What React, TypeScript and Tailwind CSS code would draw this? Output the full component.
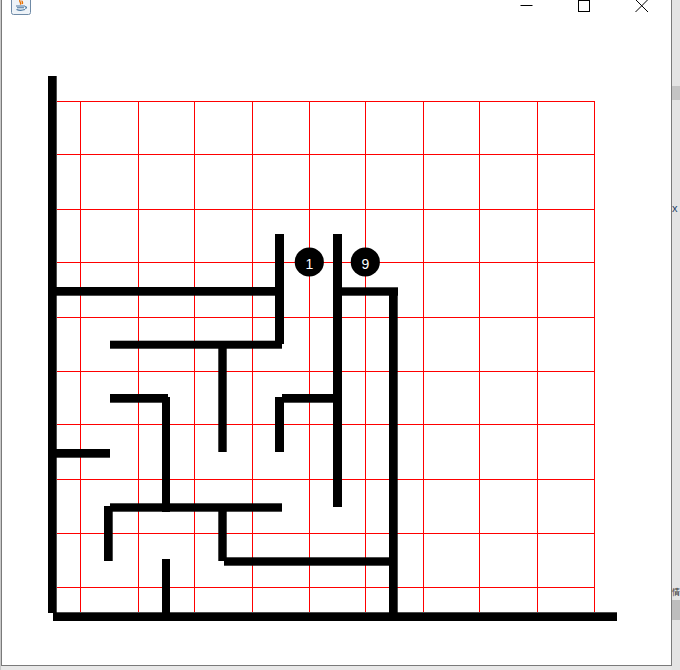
import React from 'react';

// wall segments of the maze, in page pixels: x, y, w, h
const walls: [number, number, number, number][] = [
  [48, 76, 8.7, 537],
  [53, 612.3, 564, 8.7],
  [48, 287, 236, 8.7],
  [275, 234, 9, 110],
  [110, 340.7, 172, 8],
  [218.3, 345, 8.4, 107],
  [110, 394, 58, 8.7],
  [162, 397, 8, 115],
  [48, 449, 62, 8.7],
  [282, 394, 60, 8.7],
  [275, 397, 9, 55],
  [333, 234, 9, 273],
  [342, 287.3, 56, 8.4],
  [389, 289, 8.7, 324],
  [110, 503.3, 172, 8.4],
  [104, 506, 8.7, 55],
  [218.3, 508, 8.4, 53],
  [224, 557.3, 166, 8.4],
  [162, 559, 8, 54],
];

const cols = [80, 138, 194, 252, 309, 365, 423, 479, 537, 594];
const rows = [101, 154, 209, 262, 317, 371, 424, 479, 533, 587];

const markers = [
  { x: 309.3, y: 262, label: '1' },
  { x: 365.3, y: 262, label: '9' },
];

const JavaIcon = () => (
  <svg width="20" height="16" viewBox="0 4 20 16">
    <rect x="0.5" y="0.5" width="19" height="19" rx="2" fill="#eef3f8" stroke="#6f8aa6" />
    <path d="M9 5 C7.8 6.8 10.6 7.4 9.4 9.6 M11.2 5.6 C10.6 6.8 12.2 7.4 11.2 9" stroke="#e76f00" strokeWidth="1.4" fill="none" />
    <path d="M5 11 H14 M6 12.8 H13 M5.5 14.6 Q9.5 16.2 14 14.6 M14 11.6 Q16.8 12.2 14.4 13.8" stroke="#4a77a0" strokeWidth="1.1" fill="none" />
  </svg>
);

const TitleBar = () => (
  <div className="h-[25px] flex items-start shrink-0">
    <div className="pl-[9px] -mt-[1px]">
      <JavaIcon />
    </div>
    <div className="flex-1" />
    <div className="w-[58px] flex justify-center">
      <svg width="13" height="12" viewBox="0 0 13 12">
        <rect x="0.5" y="5" width="12" height="1" fill="#000" />
      </svg>
    </div>
    <div className="w-[58px] flex justify-center">
      <svg width="13" height="12" viewBox="0 0 13 12">
        <rect x="0.5" y="0.5" width="11" height="11" fill="none" stroke="#000" />
      </svg>
    </div>
    <div className="w-[58px] flex justify-center">
      <svg width="14" height="12" viewBox="0 1 14 12">
        <path d="M0.5 0.5 L13 13 M13 0.5 L0.5 13" stroke="#000" strokeWidth="1" fill="none" />
      </svg>
    </div>
  </div>
);

const Maze = () => (
  <svg width="669" height="640" viewBox="2 25 669 640" className="block">
    <g shapeRendering="crispEdges" fill="#ff0000">
      {rows.map((y) => (
        <rect key={'r' + y} x={57} y={y} width={538} height={1} />
      ))}
      {cols.map((x) => (
        <rect key={'c' + x} x={x} y={101} width={1} height={511} />
      ))}
    </g>
    <g fill="#000">
      {walls.map(([x, y, w, h], i) => (
        <rect key={i} x={x} y={y} width={w} height={h} />
      ))}
    </g>
    {markers.map((m) => (
      <g key={m.label}>
        <circle cx={m.x} cy={m.y} r={14.6} fill="#000" />
        <text
          x={m.x}
          y={m.y + 7}
          textAnchor="middle"
          fill="#fff"
          fontSize="14"
          fontFamily="'Liberation Sans', Arial, sans-serif"
        >
          {m.label}
        </text>
      </g>
    ))}
  </svg>
);

const App = () => {
  return (
    <div className="w-[680px] h-[670px] bg-[#e8e8e8] flex overflow-hidden">
      <div className="w-[1px] h-full bg-[#c9c9c9]" />
      <div className="w-[671px] h-[666px] bg-white border-x border-b border-[#7a7a7a] flex flex-col">
        <TitleBar />
        <Maze />
      </div>
      <div className="flex-1 h-full flex flex-col bg-[#e4e4e4]">
        <div className="h-[86px]" />
        <div className="h-[14px] bg-[#c4c4c4]" />
        <div className="h-[102px]" />
        <div className="h-[12px] text-[11px] leading-[12px] text-[#1e3f66] font-['Liberation_Sans',sans-serif]">x</div>
        <div className="h-[370px]" />
        <div className="h-[16px] text-[8px] leading-[16px] text-[#333] font-['Noto_Sans_CJK_SC',sans-serif]">情</div>
        <div className="h-[20px] bg-[#bdbdbd]" />
      </div>
    </div>
  );
};

export default App;
